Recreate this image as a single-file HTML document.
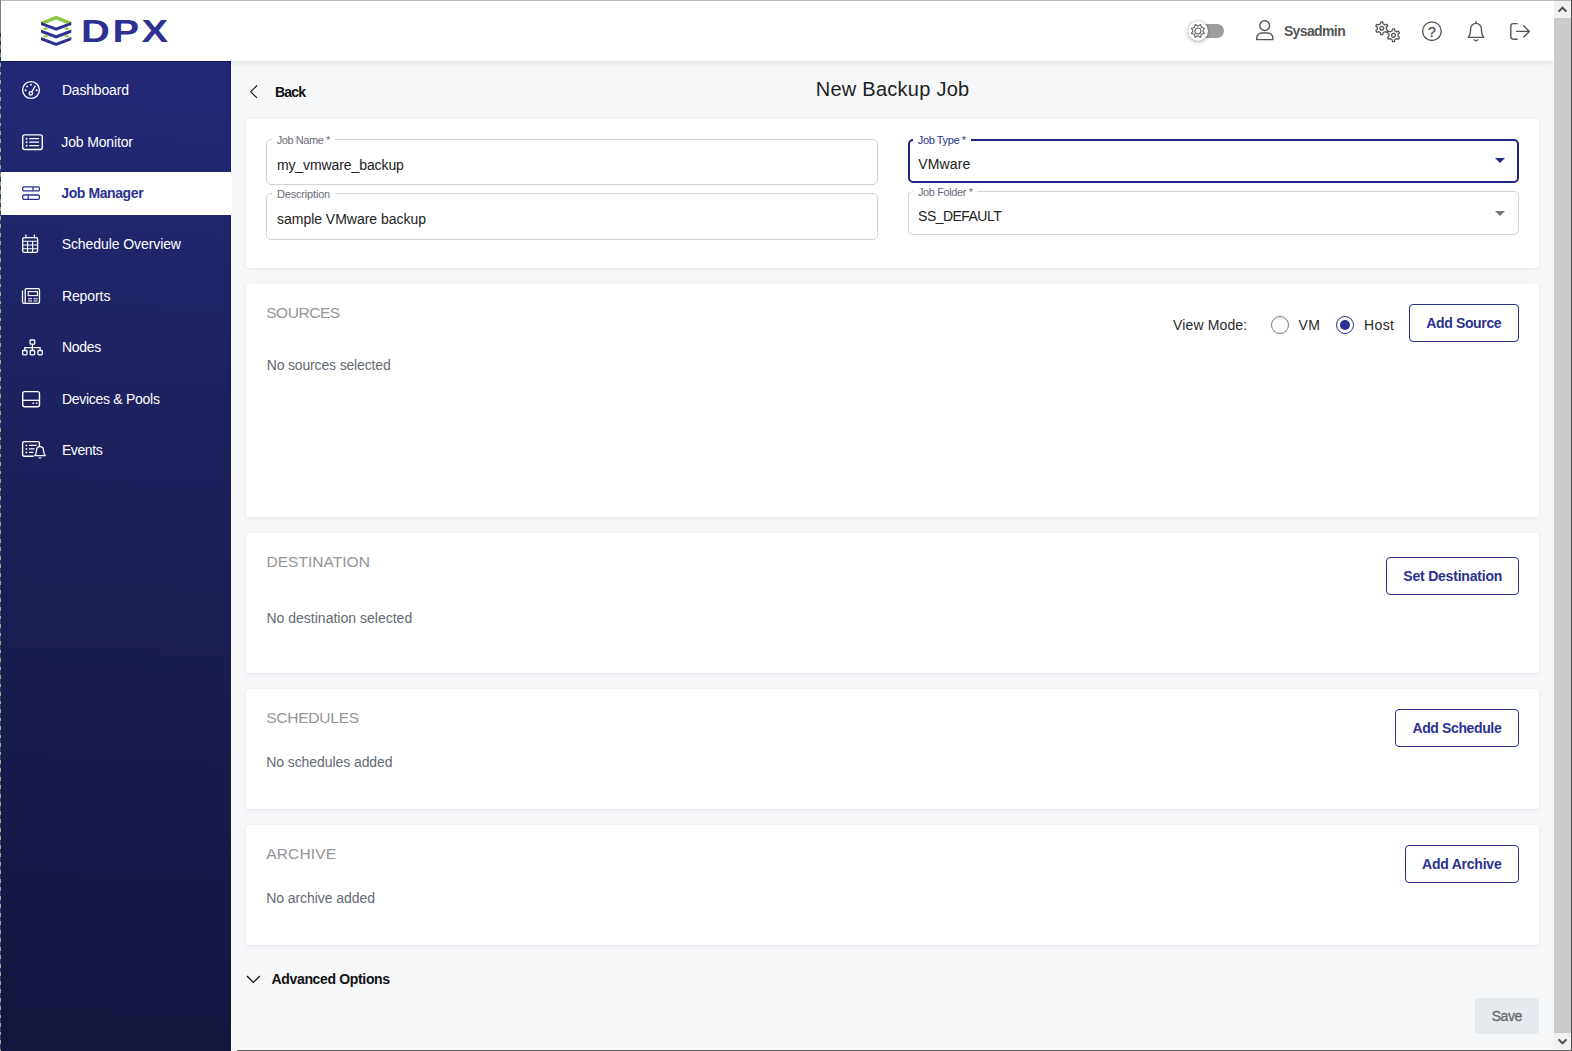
<!DOCTYPE html>
<html lang="en">
<head>
<meta charset="utf-8">
<title>DPX - New Backup Job</title>
<style>
*{box-sizing:border-box;margin:0;padding:0}
html,body{width:1572px;height:1051px;overflow:hidden;background:#f5f7f9;font-family:"Liberation Sans",sans-serif}
#app{position:absolute;left:0;top:0;width:1572px;height:1051px;overflow:hidden;background:#f5f7f9}
.abs{position:absolute}
.t{position:absolute;white-space:nowrap;line-height:1;font-family:"Liberation Sans",sans-serif}
/* window frame */
#f-top{left:0;top:0;width:1572px;height:1px;background:#b9b9b9;z-index:50}
#f-left{left:0;top:0;width:1px;height:1051px;background:#7d7d7d;z-index:50}
#f-left2{left:0;top:33px;width:1px;height:28px;background:repeating-linear-gradient(#0e3a5e 0,#0e3a5e 4px,#8a8a8a 4px,#8a8a8a 8px);z-index:51}
#f-left3{left:0;top:61px;width:1px;height:990px;background:repeating-linear-gradient(#1b4a68 0,#1b4a68 2px,#a8a088 2px,#a8a088 5.5px,#1b4a68 5.5px,#1b4a68 8.5px);z-index:51}
#f-right{left:1571px;top:0;width:1px;height:1051px;background:#4a4a4a;z-index:50}
#f-bot{left:237px;top:1050px;width:1335px;height:1px;background:#5a5a5a;z-index:50}
#f-bot2{left:237px;top:1049px;width:1334px;height:1px;background:#fdfdfd;z-index:49}
#side-edge{left:231px;top:61px;width:1px;height:990px;background:#fcfcfd;z-index:12}
/* header */
#header-bg{left:1px;top:1px;width:1553px;height:60px;background:#fff;box-shadow:0 2px 5px rgba(0,0,0,.08);z-index:20}
/* sidebar */
#side-bg{left:1px;top:61px;width:230px;height:990px;background:linear-gradient(183deg,#232978 0%,#1b1e56 50%,#14153e 100%);box-shadow:inset -1px 0 0 rgba(0,0,50,.30),inset 0 1px 0 rgba(0,0,70,.45);z-index:10}
#active{left:1px;top:172px;width:230px;height:43px;background:#fff;z-index:11}
/* scrollbar */
#sb{left:1554px;top:1px;width:17px;height:1049px;background:#f1f1f1;z-index:40}
#sb-thumb{left:1554px;top:18px;width:17px;height:1015px;background:#cbcbcb;z-index:41}
/* cards */
.card{position:absolute;left:246px;width:1293px;background:#fff;border-radius:4px;box-shadow:0 1px 4px rgba(20,30,60,.075)}
.field{position:absolute;border:1px solid #d3d4d7;border-radius:5px;background:transparent}
.notch{position:absolute;height:3px;background:#fff}
button{font:inherit;margin:0;padding:0;-webkit-appearance:none;appearance:none;overflow:visible}
.btn{position:absolute;border:1px solid #2b3190;border-radius:4px;background:#fff}
.btn-save{position:absolute;border:0;border-radius:4px;background:#e6e9ee}
h1,h2,p,label{margin:0;font-weight:400}
.radio{position:absolute;width:18px;height:18px;border-radius:50%;background:#fff}
svg{position:absolute;overflow:visible}
.z30{z-index:30}
</style>
</head>
<body>
<div id="app">
<!-- window frame (browser chrome edges visible in the capture) -->
<div id="f-top" class="abs"></div><div id="f-left" class="abs"></div><div id="f-left2" class="abs"></div><div id="f-left3" class="abs"></div><div id="f-right" class="abs"></div><div id="f-bot" class="abs"></div><div id="f-bot2" class="abs"></div>

<!-- ================= HEADER ================= -->
<header>
<div id="header-bg" class="abs"></div>
<div class="abs" style="left:1190px;top:24px;width:34px;height:14px;border-radius:7px;background:#9e9e9e;z-index:24"></div>
<div class="abs" style="left:1188px;top:21px;width:20px;height:20px;border-radius:50%;background:#fff;box-shadow:0 1px 4px rgba(0,0,0,.32),0 0 1px rgba(0,0,0,.25);z-index:25"></div>
<svg style="left:0;top:0;z-index:30" width="1572" height="62" viewBox="0 0 1572 62">
<g transform="translate(41 16)">
<path d="M15.1 -0.2 L30.3 5.7 V6.4 L26.2 8 L15.1 3.6 L4 8 L0 6.4 V5.7 Z" fill="#8dc63f"/>
<path d="M0 5.9 L15.1 11.6 L30.3 5.9 V9.1 L15.1 14.8 L0 9.1 Z" fill="#2e3192"/>
<path d="M0 13.5 L15.1 19.2 L30.3 13.5 V16.7 L15.1 22.4 L0 16.7 Z" fill="#2e3192"/>
<path d="M0 21.1 L15.1 26.8 L30.3 21.1 V24.3 L15.1 30.0 L0 24.3 Z" fill="#2e3192"/>
<path d="M1.4 12.8 L4.8 11.3 L7.6 12.4 L4.4 13.9 Z M28.9 12.8 L25.5 11.3 L22.7 12.4 L25.9 13.9 Z" fill="#8dc63f"/>
<path d="M1.4 20.4 L4.8 18.9 L7.6 20.0 L4.4 21.5 Z M28.9 20.4 L25.5 18.9 L22.7 20.0 L25.9 21.5 Z" fill="#8dc63f"/>
</g>
<path d="M1197.90,26.00 L1200.58,24.43 L1201.36,27.44 L1204.37,28.22 L1202.80,30.90 L1204.37,33.58 L1201.36,34.36 L1200.58,37.37 L1197.90,35.80 L1195.22,37.37 L1194.44,34.36 L1191.43,33.58 L1193.00,30.90 L1191.43,28.22 L1194.44,27.44 L1195.22,24.43Z" stroke="#5e5e5e" fill="none" stroke-width="1.05" stroke-linejoin="round"/><circle cx="1197.9" cy="30.9" r="3" stroke="#5e5e5e" fill="none" stroke-width="1.05"/>
<g stroke="#555" fill="none" stroke-width="1.4"><circle cx="1264.7" cy="25.6" r="4.9"/><path d="M1256.7 39.6 V38 a5 5 0 0 1 5 -5 H1267.9 a5 5 0 0 1 5 5 V39.6 Z" stroke-linejoin="round"/></g>
<g stroke="#555" fill="none" stroke-width="1.3" stroke-linejoin="round"><path d="M1380.44,23.80 L1380.87,21.97 L1382.73,21.97 L1383.16,23.80 L1385.02,24.87 L1386.82,24.32 L1387.75,25.94 L1386.38,27.23 L1386.38,29.37 L1387.75,30.66 L1386.82,32.28 L1385.02,31.73 L1383.16,32.80 L1382.73,34.63 L1380.87,34.63 L1380.44,32.80 L1378.58,31.73 L1376.78,32.28 L1375.85,30.66 L1377.22,29.37 L1377.22,27.23 L1375.85,25.94 L1376.78,24.32 L1378.58,24.87Z"/><circle cx="1381.8" cy="28.3" r="1.9"/><path d="M1392.14,30.70 L1392.57,28.87 L1394.43,28.87 L1394.86,30.70 L1396.72,31.77 L1398.52,31.22 L1399.45,32.84 L1398.08,34.13 L1398.08,36.27 L1399.45,37.56 L1398.52,39.18 L1396.72,38.63 L1394.86,39.70 L1394.43,41.53 L1392.57,41.53 L1392.14,39.70 L1390.28,38.63 L1388.48,39.18 L1387.55,37.56 L1388.92,36.27 L1388.92,34.13 L1387.55,32.84 L1388.48,31.22 L1390.28,31.77Z"/><circle cx="1393.5" cy="35.2" r="1.9"/></g>
<circle cx="1431.9" cy="31.2" r="9.3" stroke="#555" fill="none" stroke-width="1.4"/>
<g stroke="#555" fill="none" stroke-width="1.4" stroke-linecap="round" stroke-linejoin="round"><path d="M1468.2 37.4 C1471 34.6 1470.4 31.6 1470.6 28.8 a5.4 5.4 0 0 1 10.8 0 C1481.6 31.6 1481 34.6 1483.8 37.4 Z"/><path d="M1476 21.6 V23"/><path d="M1474.2 39.6 a1.9 1.9 0 0 0 3.6 0"/></g>
<g stroke="#555" fill="none" stroke-width="1.4"><path d="M1517.6 23.6 H1513.4 a2.6 2.6 0 0 0 -2.6 2.6 V36.6 a2.6 2.6 0 0 0 2.6 2.6 H1517.6"/><path d="M1516 31.4 H1529.2 M1523.4 25.5 L1529.3 31.4 L1523.4 37.3"/></g>
</svg>
<div class="abs" style="left:0;top:0;z-index:30">
<span class="t" style="left:81.0px;top:15.78px;font-size:30.5px;font-weight:700;color:#2e3192;letter-spacing:1.95px;transform:scaleX(1.31);transform-origin:0 0;">DPX</span>
<span class="t" style="left:1283.9px;top:24.05px;font-size:14px;font-weight:700;color:#555;letter-spacing:-0.620px;">Sysadmin</span>
<span class="t" style="left:1428.0px;top:24.75px;font-size:14px;font-weight:400;color:#555;-webkit-text-stroke:.35px #555;">?</span>
</div>
</header>

<!-- ================= SIDEBAR ================= -->
<nav>
<div id="side-bg" class="abs"></div>
<div id="side-edge" class="abs"></div>
<div id="active" class="abs"></div>
<svg style="left:0;top:0;z-index:30" width="232" height="1051" viewBox="0 0 232 1051">
<g stroke="#fff" fill="none" stroke-width="1.4"><circle cx="31" cy="90" r="8.4"/><circle cx="30.8" cy="93.4" r="1.7" stroke-width="1.2"/><path d="M31.8 91.9 L35.2 86.2" stroke-width="1.3" stroke-linecap="round"/></g>
<g fill="#fff"><circle cx="25.6" cy="90.2" r=".95"/><circle cx="27.2" cy="86.4" r=".95"/><circle cx="30.9" cy="84.8" r=".95"/><circle cx="36.6" cy="90.2" r=".95"/></g>
<g stroke="#fff" fill="none"><rect x="22.7" y="134.9" width="19.6" height="14.6" rx="2" stroke-width="1.4"/><path d="M29.3 138.7 H39.1 M29.3 142.2 H39.1 M29.3 145.7 H39.1" stroke-width="1.2"/></g>
<g fill="#fff"><circle cx="26.6" cy="138.7" r=".95"/><circle cx="26.6" cy="142.2" r=".95"/><circle cx="26.6" cy="145.7" r=".95"/></g>
<g stroke="#2b3190" fill="none" stroke-width="1.3"><rect x="22.7" y="186.9" width="16.7" height="4" rx="1.2"/><rect x="22.7" y="195" width="16.7" height="4.3" rx="1.2"/><path d="M33 186.9 V190.9 M28.2 195 V199.3"/></g>
<g stroke="#fff" fill="none" stroke-width="1.3"><rect x="22.7" y="237.6" width="14.9" height="14.8" rx="1.6"/><path d="M25.9 235 V238 M34.4 235 V238" stroke-linecap="round"/><path d="M22.7 241.2 H37.6 M22.7 245 H37.6 M22.7 248.7 H37.6 M27.6 241.2 V252.4 M32.6 241.2 V252.4" stroke-width="1.1"/></g>
<g stroke="#fff" fill="none" stroke-width="1.3"><path d="M25.2 303.4 V289.9 a1.2 1.2 0 0 1 1.2 -1.2 H38.3 a1.2 1.2 0 0 1 1.2 1.2 V301.8 a1.6 1.6 0 0 1 -1.6 1.6 H24.1 a1.6 1.6 0 0 1 -1.6 -1.6 V290.6"/><rect x="28.2" y="291.6" width="9.2" height="4" stroke-width="1.1"/><path d="M28 298.8 H32 M33.6 298.8 H37.6 M28 301 H32 M33.6 301 H37.6" stroke-width="1"/></g>
<g stroke="#fff" fill="none" stroke-width="1.3"><rect x="30.1" y="340" width="4.6" height="4.2" rx=".8"/><rect x="22.6" y="350.5" width="4.4" height="4.4" rx=".8"/><rect x="30.2" y="350.5" width="4.4" height="4.4" rx=".8"/><rect x="37.9" y="350.5" width="4.4" height="4.4" rx=".8"/><path d="M32.4 344.2 V350.5 M24.8 350.5 V347.6 H40.1 V350.5" stroke-width="1.2"/></g>
<g stroke="#fff" fill="none" stroke-width="1.4"><rect x="22.7" y="391.6" width="16.8" height="15.2" rx="2"/><path d="M22.7 400.3 H39.5" stroke-width="1.3"/></g>
<g fill="#fff"><circle cx="33.3" cy="403.2" r=".85"/><circle cx="36.6" cy="403.2" r=".85"/></g>
<g stroke="#fff" fill="none"><path d="M33.5 456.3 H24.2 a1.6 1.6 0 0 1 -1.6 -1.6 V443.2 a1.6 1.6 0 0 1 1.6 -1.6 H37.8 a1.6 1.6 0 0 1 1.6 1.6 V446" stroke-width="1.4"/><path d="M29 445.4 H36.6 M29 448.9 H34.6 M29 452.4 H33.4" stroke-width="1.2"/></g>
<g fill="#fff"><circle cx="26.4" cy="445.4" r=".95"/><circle cx="26.4" cy="448.9" r=".95"/><circle cx="26.4" cy="452.4" r=".95"/></g>
<g stroke="#fff" fill="none" stroke-width="1.3" stroke-linejoin="round"><path d="M34.6 455.6 C36.6 453.6 36.2 451.6 36.6 450 a3.4 3.4 0 0 1 6.8 0 C43.8 451.6 43.4 453.6 45.4 455.6 Z" fill="#1c1f5e"/><path d="M38.8 457.4 a1.3 1.3 0 0 0 2.4 0" stroke-width="1.1"/></g>
</svg>
<div class="abs" style="left:0;top:0;z-index:30">
<span class="t" style="left:61.9px;top:83.25px;font-size:14px;font-weight:400;color:#fff;letter-spacing:-0.175px;">Dashboard</span>
<span class="t" style="left:61.3px;top:135.25px;font-size:14px;font-weight:400;color:#fff;letter-spacing:-0.146px;">Job Monitor</span>
<span class="t" style="left:61.3px;top:186.05px;font-size:14px;font-weight:700;color:#2b3190;letter-spacing:-0.406px;">Job Manager</span>
<span class="t" style="left:61.7px;top:237.05px;font-size:14px;font-weight:400;color:#fff;letter-spacing:-0.083px;">Schedule Overview</span>
<span class="t" style="left:61.9px;top:289.25px;font-size:14px;font-weight:400;color:#fff;letter-spacing:-0.089px;">Reports</span>
<span class="t" style="left:61.9px;top:340.15px;font-size:14px;font-weight:400;color:#fff;letter-spacing:-0.267px;">Nodes</span>
<span class="t" style="left:61.9px;top:392.15px;font-size:14px;font-weight:400;color:#fff;letter-spacing:-0.281px;">Devices &amp; Pools</span>
<span class="t" style="left:61.9px;top:442.95px;font-size:14px;font-weight:400;color:#fff;letter-spacing:-0.383px;">Events</span>
</div>
</nav>

<!-- ================= MAIN ================= -->
<main>
<!-- title row -->
<svg style="left:249px;top:84px" width="10" height="16" viewBox="0 0 10 16"><path d="M8 1.5 L1.7 7.7 L8 13.9" fill="none" stroke="#111" stroke-width="1.1"/></svg>
<span class="t" style="left:275.1px;top:85.05px;font-size:14px;font-weight:700;color:#111;letter-spacing:-0.856px;">Back</span>
<h1 class="t" style="left:815.7px;top:78.87px;font-size:20px;font-weight:400;color:#222;letter-spacing:0.263px;">New Backup Job</h1>

<!-- card 1: job form -->
<section>
<div class="card" style="top:119px;height:149px"></div>
<div class="field" style="left:266px;top:139px;width:612px;height:46px"></div>
<div class="notch" style="left:272px;top:138px;width:63px"></div>
<label class="t" style="left:276.8px;top:134.59px;font-size:11px;font-weight:400;color:#6a6d7c;letter-spacing:-0.454px;">Job Name *</label>
<div class="t" style="left:276.9px;top:157.95px;font-size:14px;font-weight:400;color:#222;letter-spacing:-0.093px;">my_vmware_backup</div>
<div class="field" style="left:266px;top:193px;width:612px;height:47px"></div>
<div class="notch" style="left:272px;top:192px;width:63px"></div>
<label class="t" style="left:277.0px;top:188.69px;font-size:11px;font-weight:400;color:#6a6d7c;letter-spacing:-0.183px;">Description</label>
<div class="t" style="left:277.0px;top:211.55px;font-size:14px;font-weight:400;color:#222;letter-spacing:-0.021px;">sample VMware backup</div>
<div class="field" style="left:908px;top:139px;width:611px;height:44px;border:2px solid #1f2687"></div>
<div class="notch" style="left:913px;top:138px;width:58px;height:4px"></div>
<label class="t" style="left:917.8px;top:135.09px;font-size:11px;font-weight:400;color:#2b3190;letter-spacing:-0.387px;">Job Type *</label>
<div class="t" style="left:918.3px;top:156.75px;font-size:14px;font-weight:400;color:#222;letter-spacing:0.128px;">VMware</div>
<svg style="left:1495px;top:158px" width="10" height="5" viewBox="0 0 10 5"><path d="M0 0 H10 L5 5 Z" fill="#232a8a"/></svg>
<div class="field" style="left:908px;top:191px;width:611px;height:44px"></div>
<div class="notch" style="left:913px;top:190px;width:64px"></div>
<label class="t" style="left:918.0px;top:187.09px;font-size:11px;font-weight:400;color:#6a6d7c;letter-spacing:-0.392px;">Job Folder *</label>
<div class="t" style="left:918.1px;top:209.15px;font-size:14px;font-weight:400;color:#222;letter-spacing:-0.538px;">SS_DEFAULT</div>
<svg style="left:1495px;top:211px" width="10" height="5" viewBox="0 0 10 5"><path d="M0 0 H10 L5 5 Z" fill="#757575"/></svg>
</section>

<!-- card 2: sources -->
<section>
<div class="card" style="top:284px;height:233px"></div>
<h2 class="t" style="left:266.2px;top:304.68px;font-size:15.5px;font-weight:400;color:#939598;letter-spacing:-0.443px;">SOURCES</h2>
<p class="t" style="left:266.7px;top:358.05px;font-size:14px;font-weight:400;color:#656a75;letter-spacing:-0.158px;">No sources selected</p>
<span class="t" style="left:1173.0px;top:318.15px;font-size:14px;font-weight:400;color:#2a2a2a;letter-spacing:0.144px;">View Mode:</span>
<span class="radio" style="left:1271px;top:316px;border:1px solid #777"></span>
<label class="t" style="left:1298.5px;top:318.15px;font-size:14px;font-weight:400;color:#2a2a2a;letter-spacing:0.500px;">VM</label>
<span class="radio" style="left:1336px;top:316px;border:1px solid #2b3190"></span>
<span class="abs" style="left:1340px;top:320px;width:10px;height:10px;border-radius:50%;background:#2b3190"></span>
<label class="t" style="left:1364.0px;top:318.15px;font-size:14px;font-weight:400;color:#2a2a2a;letter-spacing:0.401px;">Host</label>
<button type="button" class="btn" style="left:1409px;top:304px;width:110px;height:38px"><span class="t" style="left:16.3px;top:11.15px;font-size:14px;font-weight:700;color:#2b3190;letter-spacing:-0.364px;">Add Source</span></button>
</section>

<!-- card 3: destination -->
<section>
<div class="card" style="top:533px;height:140px"></div>
<h2 class="t" style="left:266.4px;top:554.28px;font-size:15.5px;font-weight:400;color:#939598;letter-spacing:0.044px;">DESTINATION</h2>
<p class="t" style="left:266.4px;top:610.75px;font-size:14px;font-weight:400;color:#656a75;letter-spacing:0.012px;">No destination selected</p>
<button type="button" class="btn" style="left:1386px;top:557px;width:133px;height:38px"><span class="t" style="left:16.3px;top:11.25px;font-size:14px;font-weight:700;color:#2b3190;letter-spacing:-0.208px;">Set Destination</span></button>
</section>

<!-- card 4: schedules -->
<section>
<div class="card" style="top:689px;height:120px"></div>
<h2 class="t" style="left:266.2px;top:710.28px;font-size:15.5px;font-weight:400;color:#939598;letter-spacing:-0.231px;">SCHEDULES</h2>
<p class="t" style="left:266.2px;top:755.35px;font-size:14px;font-weight:400;color:#656a75;letter-spacing:-0.074px;">No schedules added</p>
<button type="button" class="btn" style="left:1395px;top:709px;width:124px;height:38px"><span class="t" style="left:16.4px;top:11.15px;font-size:14px;font-weight:700;color:#2b3190;letter-spacing:-0.369px;">Add Schedule</span></button>
</section>

<!-- card 5: archive -->
<section>
<div class="card" style="top:825px;height:120px"></div>
<h2 class="t" style="left:266.2px;top:846.18px;font-size:15.5px;font-weight:400;color:#939598;letter-spacing:0.182px;">ARCHIVE</h2>
<p class="t" style="left:266.2px;top:891.25px;font-size:14px;font-weight:400;color:#656a75;letter-spacing:-0.063px;">No archive added</p>
<button type="button" class="btn" style="left:1405px;top:845px;width:114px;height:38px"><span class="t" style="left:16.0px;top:11.15px;font-size:14px;font-weight:700;color:#2b3190;letter-spacing:-0.225px;">Add Archive</span></button>
</section>

<!-- advanced options + save -->
<svg style="left:246px;top:973px" width="15" height="12" viewBox="0 0 15 12"><path d="M1 3 L7.4 9.4 L13.8 3" fill="none" stroke="#111" stroke-width="1.3"/></svg>
<span class="t" style="left:271.5px;top:972.45px;font-size:14px;font-weight:700;color:#111;letter-spacing:-0.339px;">Advanced Options</span>
<button type="button" class="btn-save" disabled style="left:1475px;top:998px;width:64px;height:36px"><span class="t" style="left:16.7px;top:11.25px;font-size:14px;font-weight:400;color:#676c74;letter-spacing:-0.407px;-webkit-text-stroke:.3px #676c74;">Save</span></button>
</main>

<!-- ================= PAGE SCROLLBAR ================= -->
<div id="sb" class="abs"></div>
<div id="sb-thumb" class="abs"></div>
<svg style="left:1554px;top:1px;z-index:45" width="17" height="17" viewBox="0 0 17 17"><path d="M4.6 10.6 L8.5 6.7 L12.4 10.6" fill="none" stroke="#505050" stroke-width="2"/></svg>
<svg style="left:1554px;top:1033px;z-index:45" width="17" height="17" viewBox="0 0 17 17"><path d="M4.6 6.4 L8.5 10.3 L12.4 6.4" fill="none" stroke="#505050" stroke-width="2"/></svg>
</div>
</body>
</html>
